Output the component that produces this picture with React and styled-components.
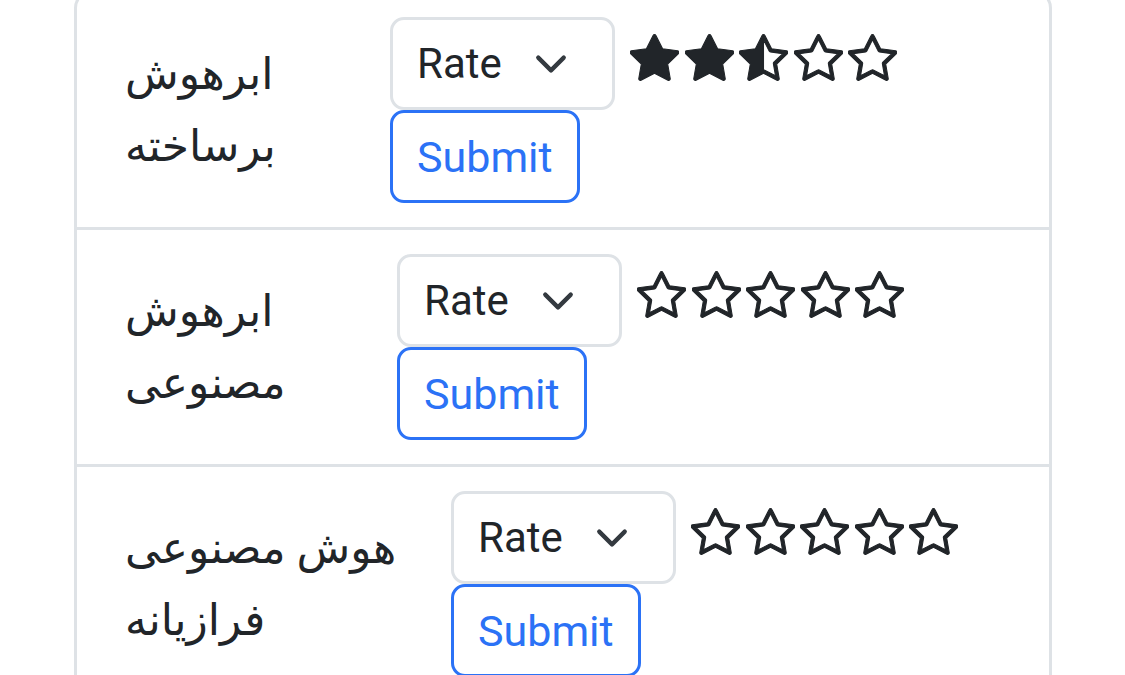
import React from 'react'
import styled, { createGlobalStyle } from 'styled-components'
import { BsStar, BsStarFill, BsStarHalf } from 'react-icons/bs'

const GlobalStyle = createGlobalStyle`
  html, body {
    margin: 0;
    padding: 0;
    background: #fff;
  }
  body {
    font-family: Roboto, "DejaVu Sans", sans-serif;
    color: #212529;
    overflow: hidden;
  }
`

const chevron = `url("data:image/svg+xml,%3csvg xmlns='http://www.w3.org/2000/svg' viewBox='0 0 16 16'%3e%3cpath fill='none' stroke='%23343a40' stroke-linecap='round' stroke-linejoin='round' stroke-width='2' d='m2 5 6 6 6-6'/%3e%3c/svg%3e")`

const Page = styled.div`
  padding: 0 73px 0 74px;
  margin-top: -10px;
`

const List = styled.ul`
  list-style: none;
  margin: 0;
  padding: 0;
`

const Item = styled.li`
  display: flex;
  align-items: center;
  padding: 24px 48px;
  border: 3px solid #dee2e6;
  &:first-child {
    border-top-left-radius: 18px;
    border-top-right-radius: 18px;
  }
  & + & {
    border-top-width: 0;
  }
`

const Name = styled.div`
  flex: none;
  width: ${p => p.w}px;
  font-size: 44px;
  line-height: 72px;
`

const Controls = styled.div`
  display: flex;
  flex-direction: column;
  align-items: flex-start;
`

const SelectLine = styled.div`
  display: flex;
  align-items: center;
  gap: 15px;
`

const RateSelect = styled.select`
  appearance: none;
  -webkit-appearance: none;
  box-sizing: border-box;
  width: 225px;
  height: 93px;
  margin: 0;
  padding: 0 72px 0 24px;
  border: 3px solid #dee2e6;
  border-radius: 14px;
  font-family: Roboto, sans-serif;
  font-size: 42px;
  color: #212529;
  background: #fff ${chevron} no-repeat right 44px center / 34px 34px;
`

const SubmitButton = styled.button`
  box-sizing: border-box;
  height: 93px;
  padding: 0 24px;
  border: 3px solid #2b72f6;
  border-radius: 14px;
  background: transparent;
  color: #2b72f6;
  font-family: Roboto, sans-serif;
  font-size: 43px;
  cursor: pointer;
`

const Stars = styled.div`
  display: flex;
  gap: 5.5px;
  margin-bottom: 12px;
  color: #212529;
`

const rows = [
  { name: 'ابرهوش برساخته', w: 265, rating: 2.5 },
  { name: 'ابرهوش مصنوعی', w: 272, rating: 0 },
  { name: 'هوش مصنوعی فرازیانه', w: 326, rating: 0 },
]

const starProps = { size: 49, strokeWidth: 0.35 }

const StarRow = ({ rating }) => (
  <Stars>
    {[1, 2, 3, 4, 5].map(i => {
      if (rating >= i) return <BsStarFill key={i} {...starProps} />
      if (rating >= i - 0.5) return <BsStarHalf key={i} {...starProps} />
      return <BsStar key={i} {...starProps} />
    })}
  </Stars>
)

export default function App() {
  return (
    <Page>
      <GlobalStyle />
      <List>
        {rows.map(r => (
          <Item key={r.name}>
            <Name w={r.w}>{r.name}</Name>
            <Controls>
              <SelectLine>
                <RateSelect defaultValue="">
                  <option value="">Rate</option>
                  <option value="1">1</option>
                  <option value="2">2</option>
                  <option value="3">3</option>
                  <option value="4">4</option>
                  <option value="5">5</option>
                </RateSelect>
                <StarRow rating={r.rating} />
              </SelectLine>
              <SubmitButton>Submit</SubmitButton>
            </Controls>
          </Item>
        ))}
      </List>
    </Page>
  )
}
